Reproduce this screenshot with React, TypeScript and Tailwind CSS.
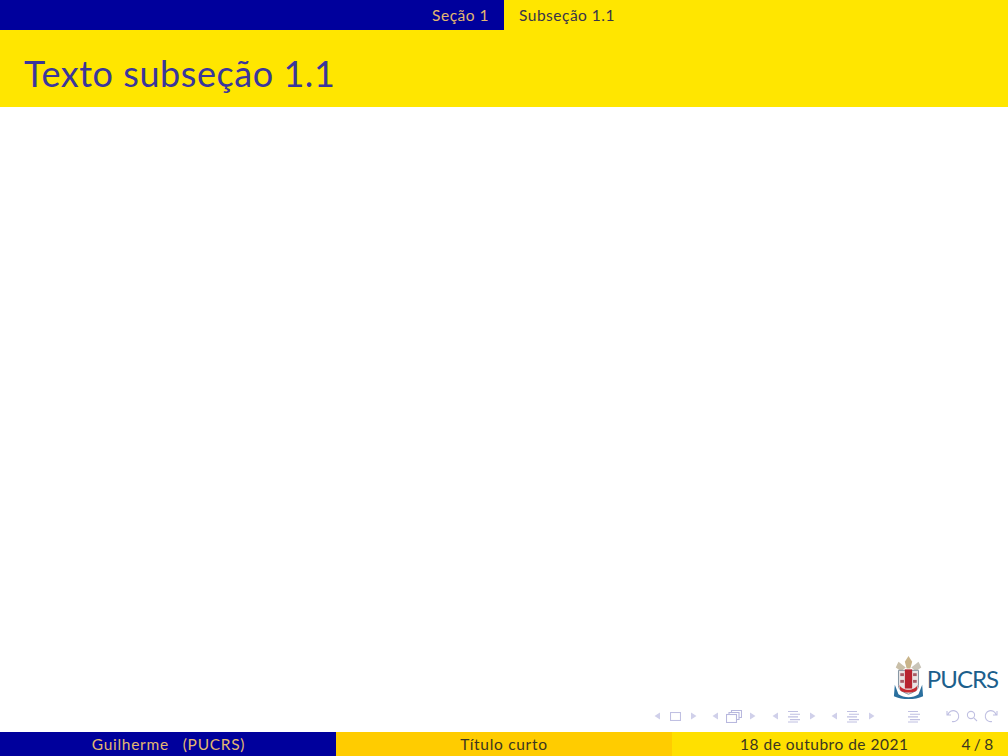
function NavArrows({ children, gap = 10 }: { children: React.ReactNode; gap?: number }) {
  return (
    <div className="flex items-center" style={{ gap }}>
      <svg width="6" height="8" viewBox="0 0 6 8"><path d="M6 0.5V7.5L0.5 4Z" fill="#d0d0ea" /></svg>
      {children}
      <svg width="6" height="8" viewBox="0 0 6 8"><path d="M0 0.5V7.5L5.5 4Z" fill="#d0d0ea" /></svg>
    </div>
  );
}

function Lines() {
  return (
    <svg width="14" height="13" viewBox="0 0 14 13" fill="none" stroke="#c0c0e2" strokeWidth="1.1">
      <path d="M1 1.5H11M3 4.2H13M1 6.9H11M3 9.6H13M1 12H11" />
    </svg>
  );
}

function Logo() {
  return (
    <div className="flex items-end">
      <svg width="31" height="44" viewBox="0 0 34 46" preserveAspectRatio="none">
        <path d="M17 0L21 6L19 13H15L13 6Z" fill="#c9b48a" />
        <path d="M6 6L14 12L9 16L3 12Z" fill="#c9bfa8" />
        <path d="M28 6L20 12L25 16L31 12Z" fill="#c9c4b8" />
        <path d="M6 15H28V31C28 36 22 38 17 40C12 38 6 36 6 31Z" fill="#e9e4e4" stroke="#7d8f9c" strokeWidth="1" />
        <rect x="13" y="14" width="8" height="20" fill="#b8232f" />
        <rect x="8" y="18" width="4" height="3" fill="#a85a64" />
        <rect x="22" y="18" width="4" height="3" fill="#a85a64" />
        <rect x="8" y="25" width="4" height="3" fill="#a85a64" />
        <rect x="22" y="25" width="4" height="3" fill="#a85a64" />
        <path d="M7 30C10 37 24 37 27 30L26 36C22 39 12 39 8 36Z" fill="#c62a32" />
        <path d="M2 30L6 40C12 44 22 44 28 40L32 30L33 42C24 46 10 46 1 42Z" fill="#2a6f9e" />
      </svg>
      <span className="ml-[3px] mb-[9px] font-['Lato',sans-serif] text-[24px] leading-[24px] tracking-[-1px] text-[#1d5f8c]">PUCRS</span>
    </div>
  );
}

export default function App() {
  return (
    <div className="flex h-[756px] w-[1008px] flex-col overflow-hidden bg-white font-['Lato',sans-serif]">
      <div className="flex h-[30px] bg-[#ffe600] text-[15.5px] leading-[30px] tracking-[0.5px]">
        <div className="w-[504px] bg-[#00009c] pr-[15px] text-right text-[#e3b870]">Seção 1</div>
        <div className="pl-[15px] text-[#38344a]">Subseção 1.1</div>
      </div>
      <div className="flex h-[77px] items-center bg-[#ffe600] pl-[24px] pt-[9px] text-[36px] tracking-[0.55px] text-[#3a369c]">
        Texto subseção 1.1
      </div>

      <div className="flex flex-1 flex-col items-end justify-end">
        <div className="mr-[10px] mb-[8px]"><Logo /></div>
        <div className="mr-[10px] mb-[8px] flex h-[16px] items-center">
          <NavArrows>
            <svg width="11" height="9" viewBox="0 0 11 9" fill="none" stroke="#c0c0e2" strokeWidth="1.1"><rect x="0.5" y="0.5" width="10" height="8" /></svg>
          </NavArrows>
          <div className="ml-[15px]">
            <NavArrows gap={8}>
              <svg width="16" height="13" viewBox="0 0 16 13" fill="none" stroke="#b8b8de" strokeWidth="1.1">
                <rect x="0.5" y="4.5" width="10" height="8" fill="white" />
                <path d="M3 4.5V2.5H13V9.5H10.5M5.5 2.5V0.5H15.5V7.5H13" />
              </svg>
            </NavArrows>
          </div>
          <div className="ml-[16px]"><NavArrows gap={9}><Lines /></NavArrows></div>
          <div className="ml-[15px]"><NavArrows gap={9}><Lines /></NavArrows></div>
          <div className="ml-[32px]"><Lines /></div>
          <svg className="ml-[25px]" width="52" height="14" viewBox="0 0 52 14" fill="none" stroke="#c0c0e2" strokeWidth="1.1">
            <path d="M2 5.5A5.5 5.5 0 1 1 6 12.5M1 2V6H5" />
            <circle cx="25" cy="6" r="3.6" />
            <path d="M27.8 8.8L31 12" />
            <path d="M50 5.5A5.5 5.5 0 1 0 46 12.5M51 2V6H47" />
          </svg>
        </div>
      </div>

      <div className="flex h-[24px] text-[15.5px] leading-[24px] tracking-[0.5px]">
        <div className="flex w-[336px] justify-center bg-[#00009c] text-[#e3b870]">
          <span className="whitespace-pre pl-[1px] tracking-[0.7px]">Guilherme   (PUCRS)</span>
        </div>
        <div className="flex w-[336px] justify-center bg-[#ffcc00] text-[#3a3620]">
          <span className="tracking-[0.7px]">Título curto</span>
        </div>
        <div className="flex w-[336px] bg-[#ffe000] text-[#3a3620]">
          <span className="ml-[68px]">18 de outubro de 2021</span>
          <span className="ml-[53px] tracking-[-0.3px]">4 / 8</span>
        </div>
      </div>
    </div>
  );
}
